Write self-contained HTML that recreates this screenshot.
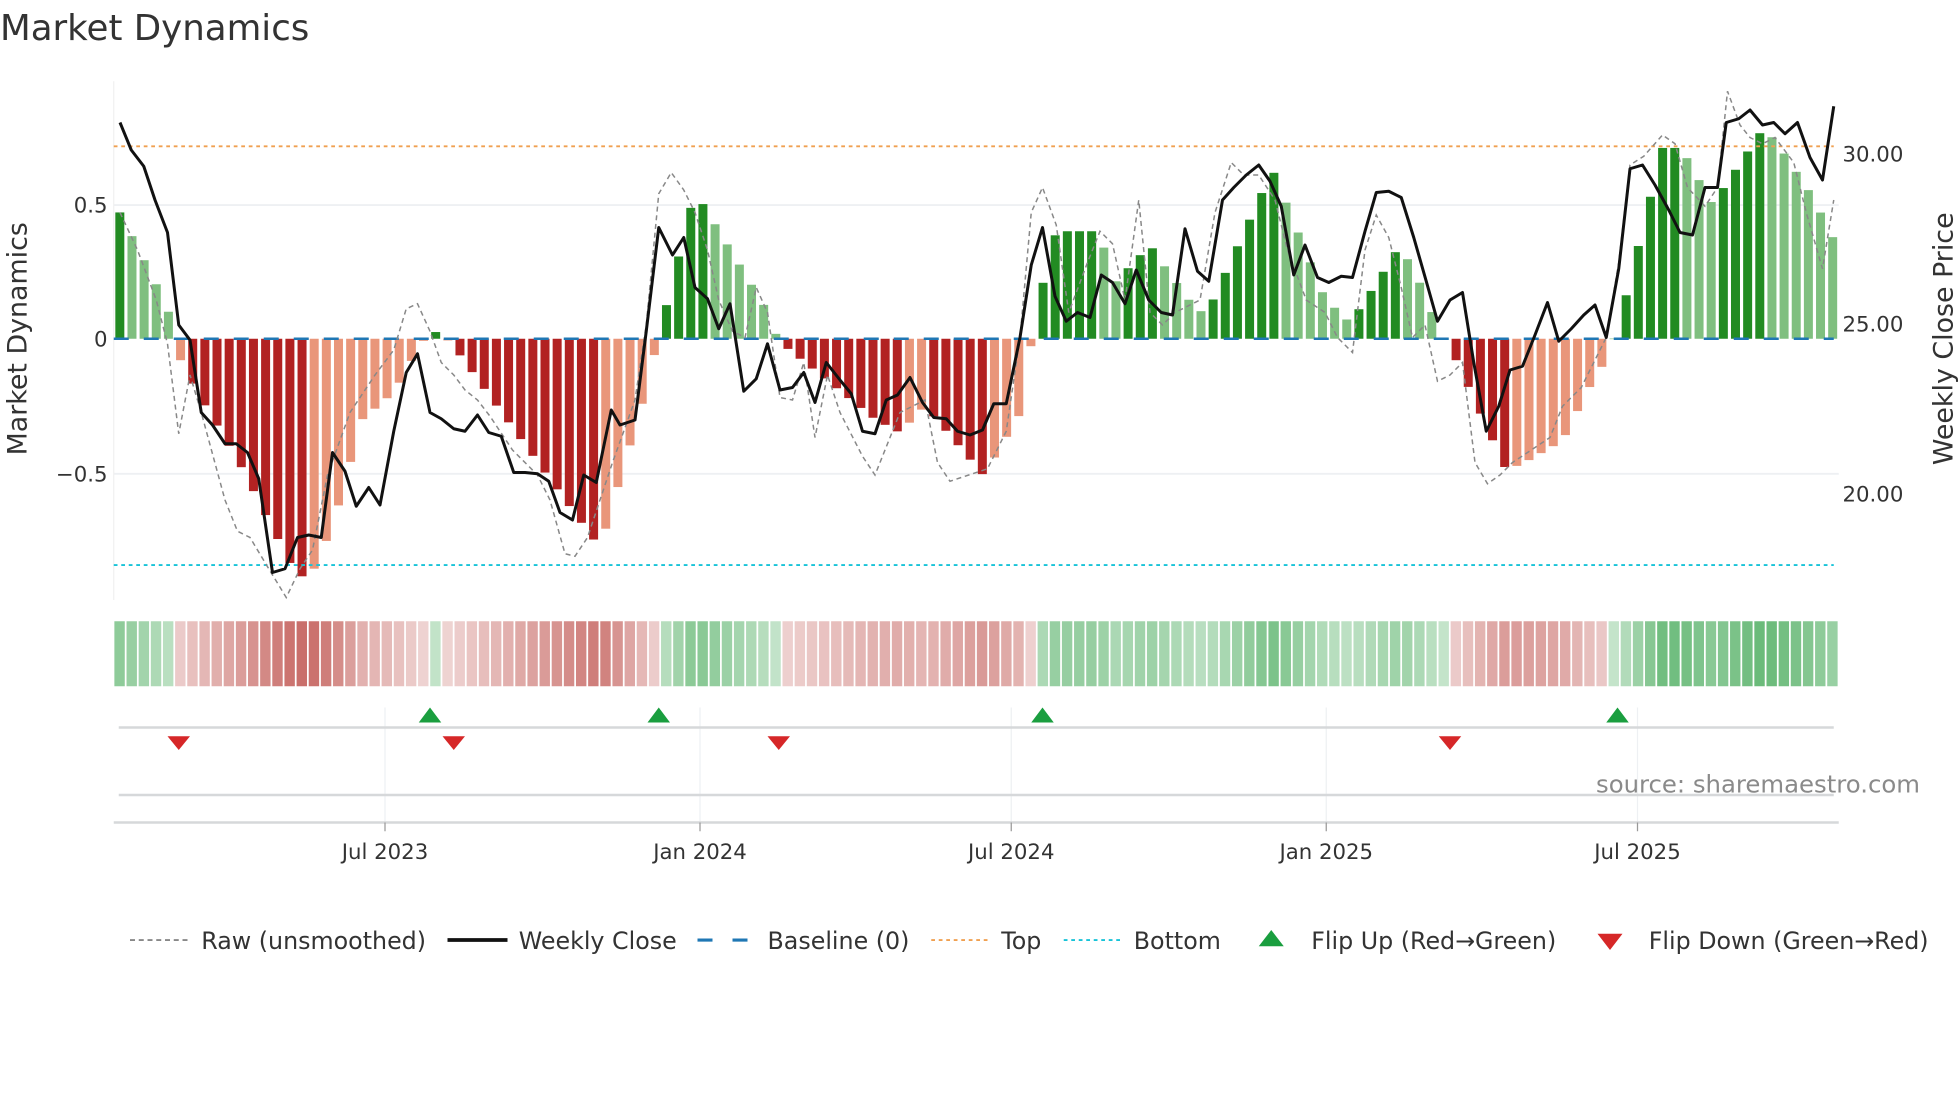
<!DOCTYPE html>
<html><head><meta charset="utf-8"><style>
html,body{margin:0;padding:0;background:#fff;width:1960px;height:1102px;overflow:hidden}
svg{display:block}
text{font-family:"DejaVu Sans","Liberation Sans",sans-serif;fill:#333}
</style></head><body>
<svg id="s" width="1960" height="1102" viewBox="0 0 1568 881.6" xmlns="http://www.w3.org/2000/svg">
<text x="0" y="32" font-size="28.5" fill="#333">Market Dynamics</text>
<line x1="91" y1="164" x2="1471" y2="164" stroke="#eef0f3" stroke-width="1.5"/>
<line x1="91" y1="379" x2="1471" y2="379" stroke="#eef0f3" stroke-width="1.5"/>
<line x1="91" y1="65" x2="91" y2="480" stroke="#f0f0f0" stroke-width="1"/>
<g id="bars"></g>
<line x1="91" y1="117" x2="1467" y2="117" stroke="#f0a050" stroke-width="1.5" stroke-dasharray="3,3"/>
<line x1="91" y1="452" x2="1467" y2="452" stroke="#17c3d8" stroke-width="1.5" stroke-dasharray="3,3"/>
<line x1="91" y1="271" x2="1467" y2="271" stroke="#1f77b4" stroke-width="2" stroke-dasharray="12,12"/>
<polyline fill="none" stroke="#888" stroke-width="1.2" stroke-dasharray="4,3" points="96,170 110,200 125,240 134,275 143,347 152,300 161,330 180,400 190,425 200,430 215,455 229,478 240,455 250,440 262,380 280,330 300,300 315,280 325,247 334,243 344,265 353,290 363,300 372,312 382,320 392,333 410,360 430,380 440,400 452,443 460,445 470,430 490,370 508,320 517,260 527,155 537,138 547,152 556,170 566,200 575,240 586,265 596,270 605,230 614,250 624,318 634,320 643,290 652,350 662,300 672,330 690,365 700,380 720,330 740,320 750,370 760,385 775,380 790,375 805,345 816,270 825,170 834,150 845,180 855,250 870,210 880,185 890,195 900,240 911,160 920,250 930,260 940,250 960,240 972,170 985,130 995,140 1007,140 1020,160 1030,200 1045,240 1060,250 1070,270 1082,282 1092,200 1101,172 1111,190 1121,230 1130,270 1140,260 1150,305 1160,300 1170,290 1180,370 1190,387 1200,380 1210,370 1225,360 1240,350 1250,325 1265,310 1275,290 1285,270 1295,210 1304,132 1315,125 1330,108 1340,115 1350,150 1364,165 1374,150 1382,73 1392,100 1400,110 1410,115 1420,110 1435,130 1445,170 1458,215 1467,160"/>
<polyline fill="none" stroke="#111" stroke-width="2.4" stroke-linejoin="round" points="96,98 105,120 115,133 124,160 134,186 143,260 152,272 161,330 170,340 180,355 189,355 198,362 207,383 218,458 228,455 238,430 247,428 257,430 266,362 276,377 285,405 295,390 304,404 315,345 325,298 334,283 344,330 353,335 363,343 372,345 382,332 391,346 401,349 411,378 420,378 430,379 439,385 448,410 458,416 467,380 477,386 489,328 496,340 508,336 517,265 527,182 538,204 547,190 556,230 566,239 575,263 584,243 595,313 605,303 614,275 624,312 634,310 643,298 652,322 661,290 672,304 681,315 690,345 700,347 709,320 718,316 728,302 738,322 747,334 757,335 766,345 776,348 786,344 795,323 805,323 816,270 825,212 834,182 844,237 853,257 862,250 872,254 881,220 890,226 900,243 909,216 919,240 929,250 938,252 948,183 958,217 967,225 978,160 987,150 997,140 1007,132 1016,145 1025,165 1035,220 1044,196 1054,222 1063,226 1073,221 1082,222 1092,185 1101,154 1111,153 1121,158 1131,190 1141,225 1150,257 1160,240 1170,234 1179,290 1189,345 1199,325 1208,296 1218,293 1228,268 1238,242 1247,273 1257,263 1267,252 1276,244 1285,270 1295,215 1304,135 1314,132 1324,148 1335,168 1344,186 1354,188 1364,150 1374,150 1381,98 1391,95 1400,88 1410,100 1419,98 1428,107 1438,98 1448,126 1458,144 1467,85"/>
<g font-size="17" text-anchor="end">
<text x="86" y="170">0.5</text><text x="86" y="277">0</text><text x="86" y="385">−0.5</text>
</g>
<g font-size="17">
<text x="1474" y="129">30.00</text><text x="1474" y="265">25.00</text><text x="1474" y="401">20.00</text>
</g>
<text transform="translate(21,271) rotate(-90)" font-size="21.5" text-anchor="middle">Market Dynamics</text>
<text transform="translate(1562,271) rotate(-90)" font-size="21.5" text-anchor="middle">Weekly Close Price</text>
<g id="strip"></g>
<g stroke="#eef0f3" stroke-width="1">
<line x1="308" y1="566" x2="308" y2="658"/><line x1="560" y1="566" x2="560" y2="658"/><line x1="809" y1="566" x2="809" y2="658"/><line x1="1061" y1="566" x2="1061" y2="658"/><line x1="1310" y1="566" x2="1310" y2="658"/>
</g>
<line x1="95" y1="582" x2="1467" y2="582" stroke="#d6d8da" stroke-width="2"/>
<line x1="95" y1="636" x2="1467" y2="636" stroke="#d6d8da" stroke-width="2"/>
<line x1="91" y1="658" x2="1471" y2="658" stroke="#d6d8da" stroke-width="2"/>
<g fill="#1a9e3f">
<path d="M344,566 L353,578 L335,578Z"/><path d="M527,566 L536,578 L518,578Z"/><path d="M834,566 L843,578 L825,578Z"/><path d="M1294,566 L1303,578 L1285,578Z"/>
</g>
<g fill="#d62728">
<path d="M134,589 L152,589 L143,600Z"/><path d="M354,589 L372,589 L363,600Z"/><path d="M614,589 L632,589 L623,600Z"/><path d="M1151,589 L1169,589 L1160,600Z"/>
</g>
<g stroke="#999" stroke-width="1"><line x1="308" y1="658" x2="308" y2="665"/><line x1="560" y1="658" x2="560" y2="665"/><line x1="809" y1="658" x2="809" y2="665"/><line x1="1061" y1="658" x2="1061" y2="665"/><line x1="1310" y1="658" x2="1310" y2="665"/></g>
<g font-size="17" text-anchor="middle">
<text x="308" y="687">Jul 2023</text><text x="560" y="687">Jan 2024</text><text x="809" y="687">Jul 2024</text><text x="1061" y="687">Jan 2025</text><text x="1310" y="687">Jul 2025</text>
</g>
<text x="1536" y="634" font-size="19.5" text-anchor="end" style="fill:#8a8a8a">source: sharemaestro.com</text>
<g font-size="19">
<line x1="104" y1="752" x2="150" y2="752" stroke="#888" stroke-width="1.5" stroke-dasharray="4,3"/><text x="161" y="759">Raw (unsmoothed)</text>
<line x1="358" y1="752" x2="406" y2="752" stroke="#111" stroke-width="3"/><text x="415" y="759">Weekly Close</text>
<line x1="558" y1="752" x2="603" y2="752" stroke="#1f77b4" stroke-width="2.5" stroke-dasharray="12,16"/><text x="614" y="759">Baseline (0)</text>
<line x1="745" y1="752" x2="790" y2="752" stroke="#f0a050" stroke-width="1.5" stroke-dasharray="3,3"/><text x="801" y="759">Top</text>
<line x1="851" y1="752" x2="896" y2="752" stroke="#17c3d8" stroke-width="1.5" stroke-dasharray="3,3"/><text x="907" y="759">Bottom</text>
<path d="M1017,744 L1027,757 L1007,757Z" fill="#1a9e3f"/><text x="1049" y="759">Flip Up (Red→Green)</text>
<path d="M1278,747 L1298,747 L1288,760Z" fill="#d62728"/><text x="1319" y="759">Flip Down (Green→Red)</text>
</g>
</svg>
<script>
(function(){
var kp=[[96,0.47],[134,0.12],[140,-0.04],[159,-0.21],[190,-0.45],[238,-0.89],[250,-0.87],[266,-0.70],[290,-0.30],[315,-0.2],[333,-0.05],[344,0.03],[353,0.02],[363,-0.03],[480,-0.78],[517,-0.19],[527,0.01],[556,0.55],[613,0.11],[623,-0.01],[700,-0.3],[720,-0.35],[740,-0.25],[787,-0.51],[816,-0.28],[825,-0.02],[834,0.2],[845,0.4],[880,0.4],[890,0.2],[920,0.35],[930,0.28],[955,0.12],[965,0.09],[1018,0.63],[1060,0.15],[1080,0.06],[1100,0.2],[1120,0.35],[1140,0.17],[1150,0.04],[1160,-0.03],[1205,-0.49],[1220,-0.46],[1250,-0.38],[1275,-0.15],[1285,-0.08],[1295,0.05],[1330,0.71],[1345,0.71],[1370,0.5],[1410,0.78],[1420,0.74],[1450,0.53],[1467,0.37]];
function val(x){if(x<=kp[0][0])return kp[0][1];for(var i=1;i<kp.length;i++){if(x<=kp[i][0]){var a=kp[i-1],b=kp[i];return a[1]+(b[1]-a[1])*(x-a[0])/(b[0]-a[0]);}}return kp[kp.length-1][1];}
var N=142,st=1380/N,ns="http://www.w3.org/2000/svg",bars=document.getElementById("bars"),strip=document.getElementById("strip");
var prev=0;
for(var i=0;i<N;i++){
 var cx=91+st*(i+0.5),v=val(cx),inc=Math.abs(v)>=Math.abs(prev)||i==0;prev=v;
 var col=v>=0?(inc?"#228b22":"#7fbf7f"):(inc?"#b22222":"#e9967a");
 var h=Math.abs(v)*215,y=v>=0?271-h:271;
 var r=document.createElementNS(ns,"rect");r.setAttribute("x",cx-3.6);r.setAttribute("width",7.2);r.setAttribute("y",y);r.setAttribute("height",Math.max(h,0.5));r.setAttribute("fill",col);bars.appendChild(r);
 var a=Math.min(1,Math.abs(v)),c;
 if(v>=0){var t=0.3+0.6*a;c="rgb("+Math.round(255-(255-60)*t)+","+Math.round(255-(255-165)*t)+","+Math.round(255-(255-80)*t)+")";}
 else{var t=0.25+0.65*a;c="rgb("+Math.round(255-(255-190)*t)+","+Math.round(255-(255-80)*t)+","+Math.round(255-(255-75)*t)+")";}
 var s=document.createElementNS(ns,"rect");s.setAttribute("x",91+st*i+0.5);s.setAttribute("width",st-1.4);s.setAttribute("y",497);s.setAttribute("height",52);s.setAttribute("fill",c);strip.appendChild(s);
}
})();
</script>
</body></html>
